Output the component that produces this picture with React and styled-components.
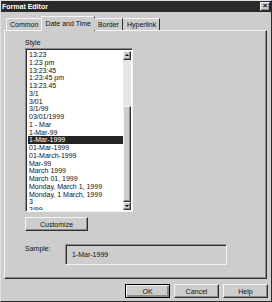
import React from 'react';
import styled, { createGlobalStyle, css } from 'styled-components';

const GlobalStyle = createGlobalStyle`
  html, body {
    margin: 0;
    background: #cdcdcd;
  }
  * {
    box-sizing: border-box;
  }
`;

const raised = css`
  border-style: solid;
  border-width: 1px;
  border-color: #f4f4f4 #303030 #303030 #f4f4f4;
  box-shadow: inset -1px -1px 0 #8a8a8a;
`;

const sunken = css`
  border-style: solid;
  border-width: 1px;
  border-color: #8a8a8a #f4f4f4 #f4f4f4 #8a8a8a;
  box-shadow: inset 1px 1px 0 #303030;
`;

const Window = styled.div`
  width: 272px;
  height: 302px;
  display: flex;
  flex-direction: column;
  background: #cdcdcd;
  border: 1px solid;
  border-color: #e0e0e0 #2a2a2a #2a2a2a #e0e0e0;
  font-family: 'Liberation Sans', Arial, sans-serif;
  font-size: 7px;
  color: #111;
`;

const TitleBar = styled.div`
  height: 11px;
  background: #2a2a2a;
  color: #fff;
  font-weight: bold;
  font-size: 7px;
  display: flex;
  align-items: center;
  justify-content: space-between;
  padding: 0 1px 0 1px;
`;

const CloseBtn = styled.div`
  width: 10px;
  height: 9px;
  background: #cdcdcd;
  ${raised};
  color: #000;
  font-size: 8px;
  font-weight: bold;
  line-height: 6px;
  display: flex;
  justify-content: center;
`;

const Tabs = styled.div`
  display: flex;
  align-items: flex-end;
  height: 18px;
  padding-left: 5px;
  position: relative;
  z-index: 1;
`;

const Tab = styled.div`
  height: ${({ $active }) => ($active ? '15px' : '12px')};
  padding: ${({ $active }) => ($active ? '0 3px 1px 3px' : '0 3px')};
  margin: ${({ $active }) => ($active ? '0 -1px -1px -1px' : '0')};
  background: #cdcdcd;
  display: flex;
  align-items: center;
  white-space: nowrap;
  border-top: 1px solid #f4f4f4;
  border-left: 1px solid ${({ $first, $active }) => ($first || $active ? '#f4f4f4' : 'transparent')};
  border-right: 1px solid #303030;
  border-radius: 1px 1px 0 0;
`;

const Panel = styled.div`
  margin: 0 4px 0 3px;
  height: 249px;
  border: 1px solid;
  border-color: #f4f4f4 #303030 #303030 #f4f4f4;
  box-shadow: inset -1px -1px 0 #8a8a8a;
  padding: 8px 20px 0 20px;
  display: flex;
  flex-direction: column;
`;

const Label = styled.div`
  line-height: 8px;
  height: 8px;
`;

const ListBox = styled.div`
  margin-top: 1px;
  width: 108px;
  height: 164px;
  ${sunken};
  display: flex;
  background: #fff;
  padding: 2px 1px 1px 2px;
`;

const Items = styled.div`
  flex: 1;
  overflow: hidden;
`;

const Item = styled.div`
  height: 7.75px;
  line-height: 7.75px;
  padding-left: 1px;
  white-space: nowrap;
  background: ${({ $selected }) => ($selected ? '#242424' : 'transparent')};
  color: ${({ $selected }) => ($selected ? '#fff' : '#111')};
`;

const ScrollBar = styled.div`
  width: 8px;
  display: flex;
  flex-direction: column;
  background: #e6e6e6;
`;

const ArrowBtn = styled.div`
  height: 9px;
  background: #cdcdcd;
  ${raised};
  display: flex;
  align-items: center;
  justify-content: center;

  &::after {
    content: '';
    width: 0;
    height: 0;
    border-left: 2px solid transparent;
    border-right: 2px solid transparent;
    ${({ $up }) =>
      $up ? 'border-bottom: 2px solid #000;' : 'border-top: 2px solid #000;'}
  }
`;

const Track = styled.div`
  flex: 1;
  display: flex;
  flex-direction: column;
`;

const Thumb = styled.div`
  margin-top: 46px;
  height: 96px;
  background: #cdcdcd;
  ${raised};
`;

const Button = styled.div`
  width: ${({ $w }) => $w || 45}px;
  height: 14px;
  background: #cdcdcd;
  ${raised};
  display: flex;
  align-items: center;
  justify-content: center;
  ${({ $default }) =>
    $default &&
    css`
      border-color: #000;
      box-shadow: inset 1px 1px 0 #f4f4f4, inset -2px -2px 0 #8a8a8a;
    `}
`;

const CustomizeRow = styled.div`
  margin-top: 5px;
`;

const SampleRow = styled.div`
  margin-top: 13px;
  display: flex;
  align-items: flex-start;
  gap: 14px;
`;

const SampleLabel = styled(Label)`
  margin-top: 1px;
  width: 26px;
`;

const SampleBox = styled.div`
  width: 162px;
  height: 21px;
  ${sunken};
  display: flex;
  align-items: center;
  padding-left: 6px;
`;

const Footer = styled.div`
  display: flex;
  justify-content: flex-end;
  gap: 4px;
  padding: 5px 3px 0 0;
`;

const styles = [
  '13:23',
  '1:23 pm',
  '13:23:45',
  '1:23:45 pm',
  '13:23.45',
  '3/1',
  '3/01',
  '3/1/99',
  '03/01/1999',
  '1 - Mar',
  '1-Mar-99',
  '1-Mar-1999',
  '01-Mar-1999',
  '01-March-1999',
  'Mar-99',
  'March 1999',
  'March 01, 1999',
  'Monday, March 1, 1999',
  'Monday, 1 March, 1999',
  '3',
  '3/99',
];

const App = () => {
  return (
    <>
      <GlobalStyle />
      <Window>
        <TitleBar>
          <span>Format Editor</span>
          <CloseBtn>×</CloseBtn>
        </TitleBar>
        <Tabs>
          <Tab $first>Common</Tab>
          <Tab $active>Date and Time</Tab>
          <Tab>Border</Tab>
          <Tab>Hyperlink</Tab>
        </Tabs>
        <Panel>
          <Label>Style</Label>
          <ListBox>
            <Items>
              {styles.map((s) => (
                <Item key={s} $selected={s === '1-Mar-1999'}>
                  {s}
                </Item>
              ))}
            </Items>
            <ScrollBar>
              <ArrowBtn $up />
              <Track>
                <Thumb />
              </Track>
              <ArrowBtn />
            </ScrollBar>
          </ListBox>
          <CustomizeRow>
            <Button $w={63}>Customize</Button>
          </CustomizeRow>
          <SampleRow>
            <SampleLabel>Sample:</SampleLabel>
            <SampleBox>1-Mar-1999</SampleBox>
          </SampleRow>
        </Panel>
        <Footer>
          <Button $default>OK</Button>
          <Button>Cancel</Button>
          <Button>Help</Button>
        </Footer>
      </Window>
    </>
  );
};

export default App;
